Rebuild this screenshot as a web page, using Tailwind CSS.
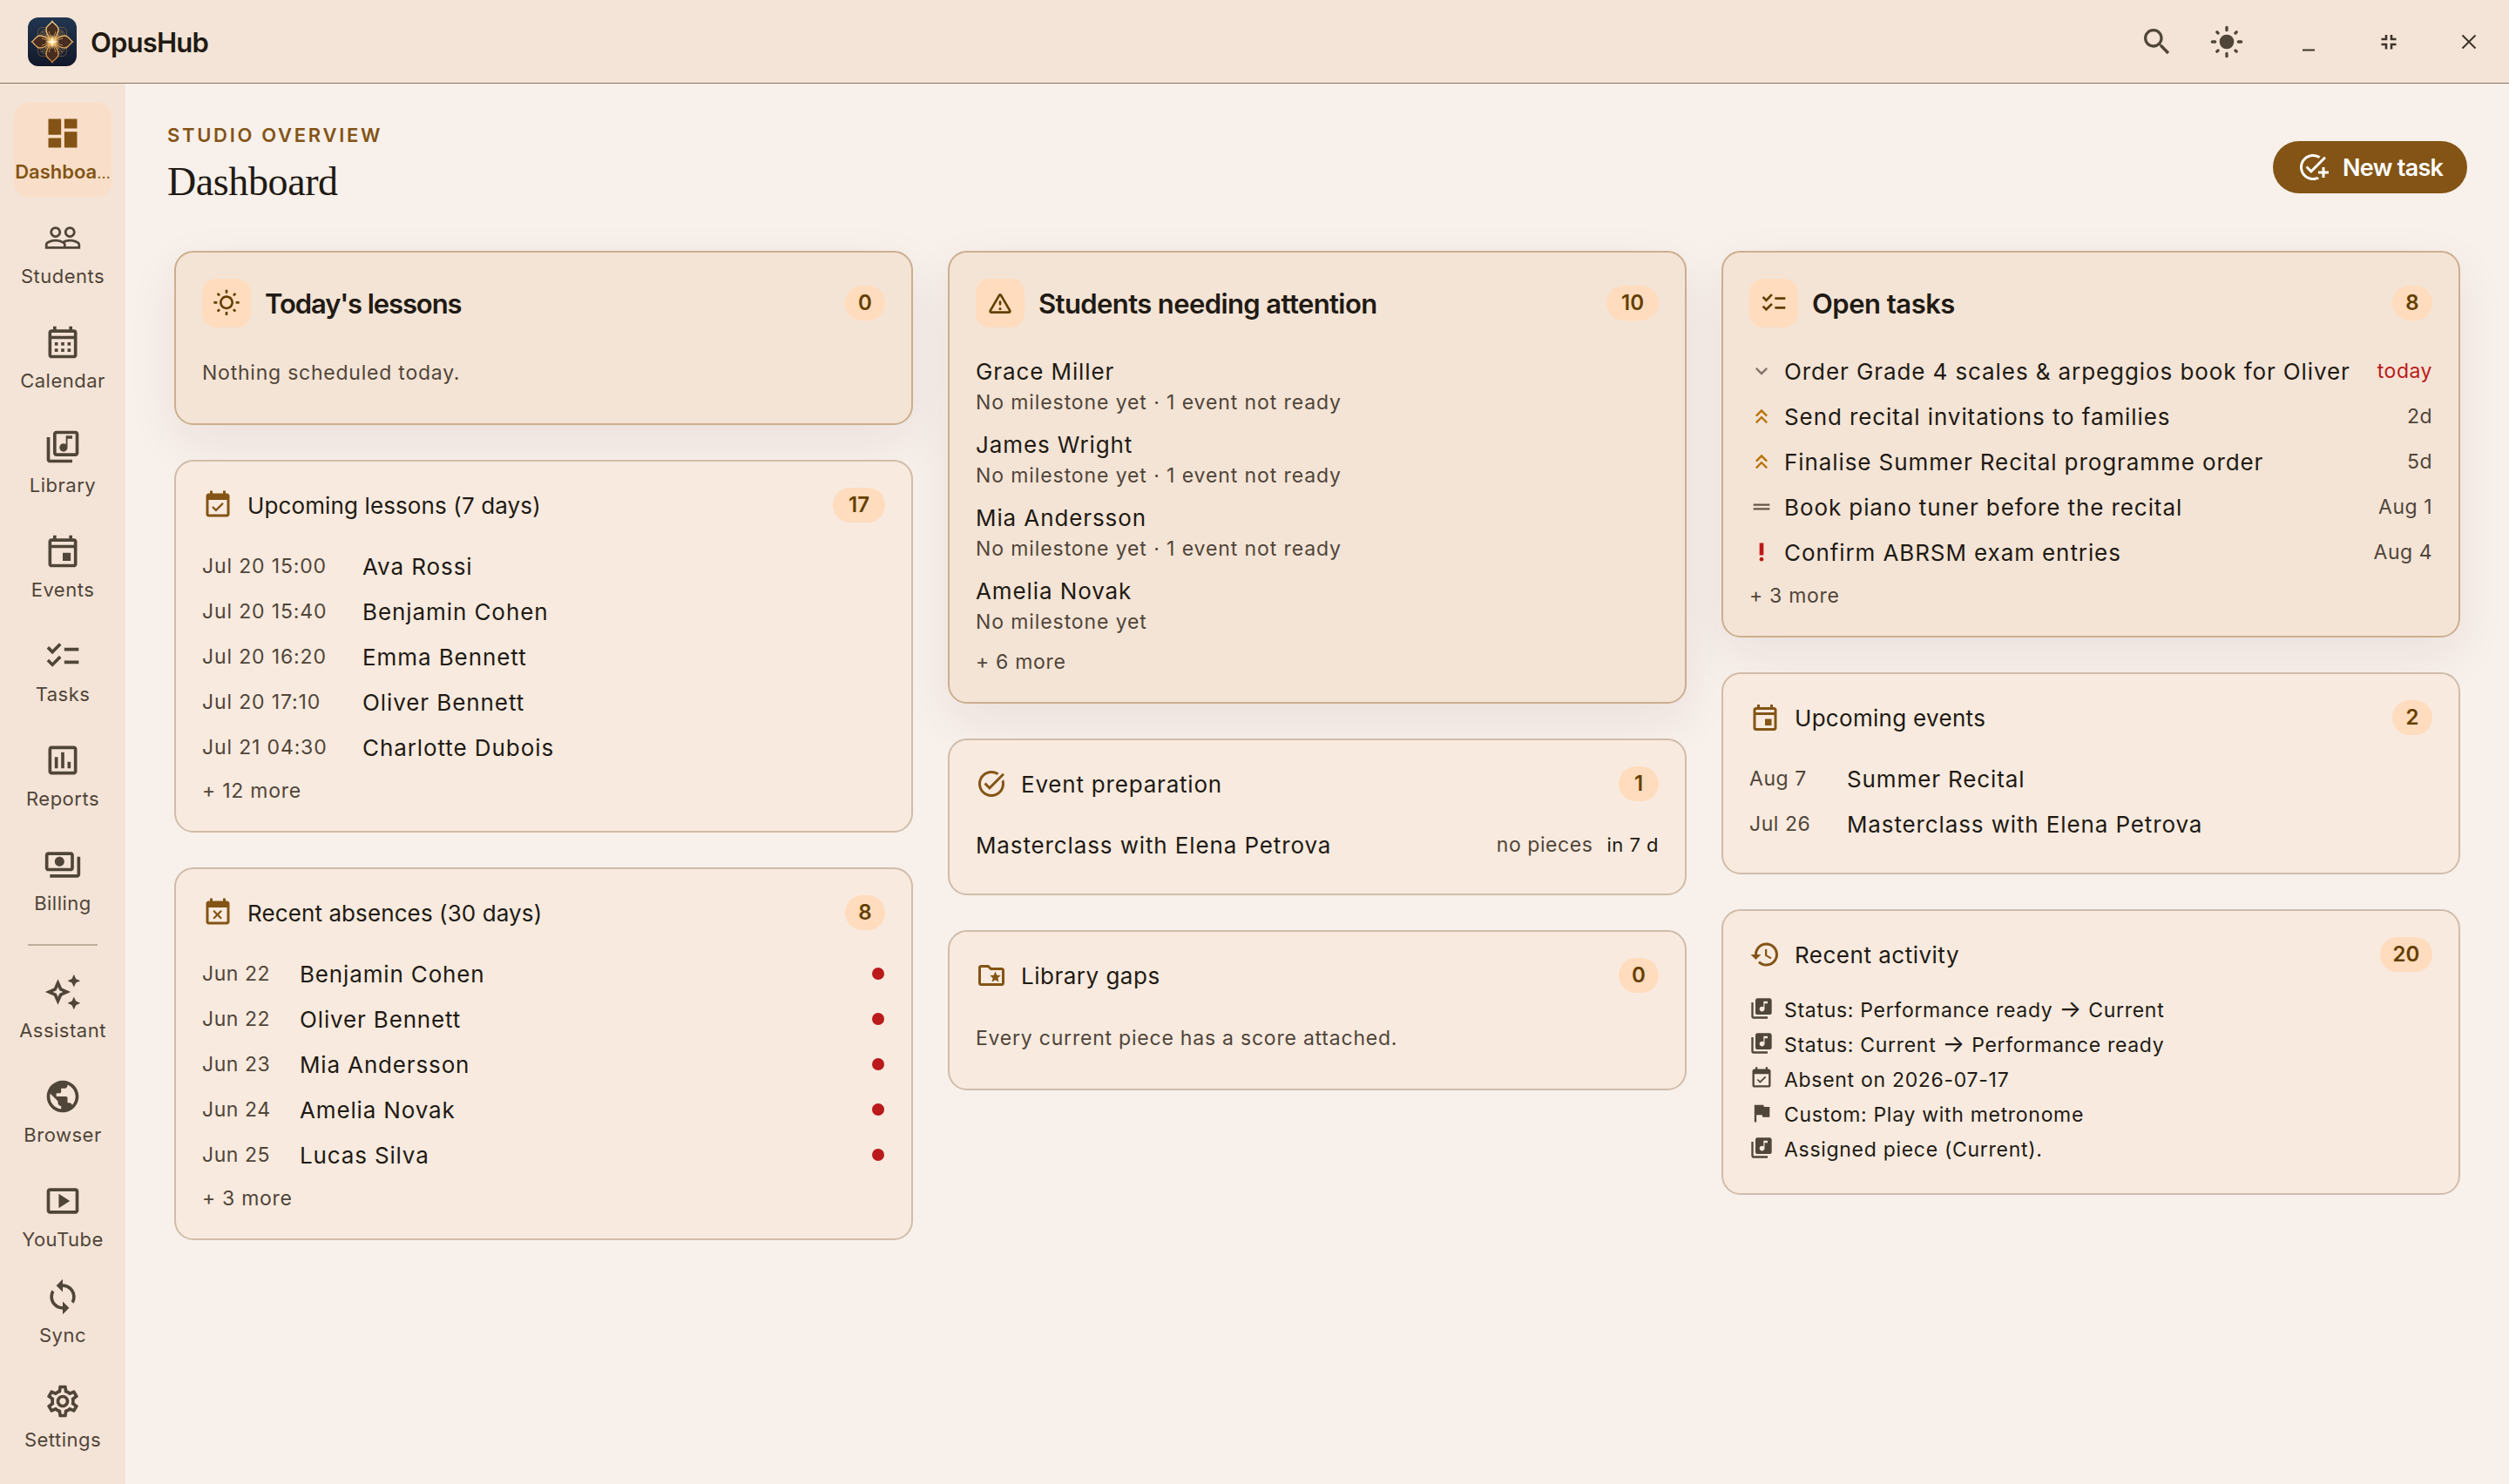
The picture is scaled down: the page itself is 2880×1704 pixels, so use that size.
<!DOCTYPE html>
<html lang="en">

<head>
    <meta charset="UTF-8">
    <meta name="viewport" content="width=device-width, initial-scale=1.0">
    <title>OpusHub</title>
    <script src="https://cdn.jsdelivr.net/npm/@tailwindcss/browser@4"></script>
</head>

<body class="w-[2880px] h-[1704px] overflow-hidden flex flex-col bg-[#f8f0eb] text-[#211a13] font-['Inter',sans-serif] font-[380]">

    <!-- icon sprite -->
    <svg class="hidden">
        <symbol id="dashboard" viewBox="0 0 24 24"><path d="M3 13h8V3H3v10zm0 8h8v-6H3v6zm10 0h8V11h-8v10zm0-18v6h8V3h-8z"/></symbol>
        <symbol id="people" viewBox="0 0 24 24"><path d="M16.5 13c-1.2 0-3.07.34-4.5 1-1.43-.67-3.3-1-4.5-1C5.33 13 1 14.08 1 16.25V19h22v-2.75c0-2.17-4.33-3.25-6.5-3.25zm-4 4.5h-10v-1.25c0-.54 2.56-1.75 5-1.75s5 1.21 5 1.75v1.25zm9 0H14v-1.25c0-.46-.2-.86-.52-1.22.88-.3 1.96-.53 3.02-.53 2.44 0 5 1.21 5 1.75v1.25zM7.5 12c1.93 0 3.5-1.57 3.5-3.5S9.43 5 7.5 5 4 6.57 4 8.5 5.57 12 7.5 12zm0-5.5c1.1 0 2 .9 2 2s-.9 2-2 2-2-.9-2-2 .9-2 2-2zm9 5.5c1.93 0 3.5-1.57 3.5-3.5S18.43 5 16.5 5 13 6.57 13 8.5s1.57 3.5 3.5 3.5zm0-5.5c1.1 0 2 .9 2 2s-.9 2-2 2-2-.9-2-2 .9-2 2-2z"/></symbol>
        <symbol id="calendar" viewBox="0 0 24 24"><path d="M19 4h-1V2h-2v2H8V2H6v2H5c-1.11 0-1.99.9-1.99 2L3 20c0 1.1.89 2 2 2h14c1.1 0 2-.9 2-2V6c0-1.1-.9-2-2-2zm0 16H5V10h14v10zm0-12H5V6h14v2zM9 14H7v-2h2v2zm4 0h-2v-2h2v2zm4 0h-2v-2h2v2zm-8 4H7v-2h2v2zm4 0h-2v-2h2v2zm4 0h-2v-2h2v2z"/></symbol>
        <symbol id="library" viewBox="0 0 24 24"><path d="M20 2H8c-1.1 0-2 .9-2 2v12c0 1.1.9 2 2 2h12c1.1 0 2-.9 2-2V4c0-1.1-.9-2-2-2zm0 14H8V4h12v12zm-7.5-1c1.38 0 2.5-1.12 2.5-2.5V7h3V5h-4v5.51c-.42-.32-.93-.51-1.5-.51-1.38 0-2.5 1.12-2.5 2.5s1.12 2.5 2.5 2.5zM4 6H2v14c0 1.1.9 2 2 2h14v-2H4V6z"/></symbol>
        <symbol id="library-fill" viewBox="0 0 24 24"><path d="M20 2H8c-1.1 0-2 .9-2 2v12c0 1.1.9 2 2 2h12c1.1 0 2-.9 2-2V4c0-1.1-.9-2-2-2zm-2 5h-3v5.5c0 1.38-1.12 2.5-2.5 2.5S10 13.88 10 12.5s1.12-2.5 2.5-2.5c.57 0 1.08.19 1.5.51V5h4v2zM4 6H2v14c0 1.1.9 2 2 2h14v-2H4V6z"/></symbol>
        <symbol id="event" viewBox="0 0 24 24"><path d="M19 4h-1V2h-2v2H8V2H6v2H5c-1.11 0-1.99.9-1.99 2L3 20c0 1.1.89 2 2 2h14c1.1 0 2-.9 2-2V6c0-1.1-.9-2-2-2zm0 16H5V10h14v10zM5 8V6h14v2H5zm7 5h5v5h-5z"/></symbol>
        <symbol id="checklist" viewBox="0 0 24 24"><path d="M22 7h-9v2h9V7zm0 8h-9v2h9v-2zM5.54 11 2 7.46l1.41-1.41 2.12 2.12 4.24-4.24 1.41 1.41L5.54 11zm0 8L2 15.46l1.41-1.41 2.12 2.12 4.24-4.24 1.41 1.41L5.54 19z"/></symbol>
        <symbol id="reports" viewBox="0 0 24 24"><path d="M9 17H7v-7h2v7zm4 0h-2V7h2v10zm4 0h-2v-4h2v4zm2 2H5V5h14v14zm0-16H5c-1.1 0-2 .9-2 2v14c0 1.1.9 2 2 2h14c1.1 0 2-.9 2-2V5c0-1.1-.9-2-2-2z"/></symbol>
        <symbol id="payments" viewBox="0 0 24 24"><path d="M19 14V6c0-1.1-.9-2-2-2H3c-1.1 0-2 .9-2 2v8c0 1.1.9 2 2 2h14c1.1 0 2-.9 2-2zm-2 0H3V6h14v8zm-7-7c-1.66 0-3 1.34-3 3s1.34 3 3 3 3-1.34 3-3-1.34-3-3-3zm13 0v11c0 1.1-.9 2-2 2H4v-2h17V7h2z"/></symbol>
        <symbol id="sparkle" viewBox="0 0 24 24"><path d="M19 9l1.25-2.75L23 5l-2.75-1.25L19 1l-1.25 2.75L15 5l2.75 1.25L19 9zm0 6l-1.25 2.75L15 19l2.75 1.25L19 23l1.25-2.75L23 19l-2.75-1.25L19 15zm-7.5-5.5L9 4 6.5 9.5 1 12l5.5 2.5L9 20l2.5-5.5L17 12l-5.5-2.5zm-1.51 3.49L9 15.17l-.99-2.18L5.83 12l2.18-.99L9 8.83l.99 2.18 2.18.99-2.18.99z"/></symbol>
        <symbol id="globe" viewBox="0 0 24 24"><path d="M12 2C6.48 2 2 6.48 2 12s4.48 10 10 10 10-4.48 10-10S17.52 2 12 2zm-1 17.93c-3.95-.49-7-3.85-7-7.93 0-.62.08-1.21.21-1.79L9 15v1c0 1.1.9 2 2 2v1.93zm6.9-2.54c-.26-.81-1-1.39-1.9-1.39h-1v-3c0-.55-.45-1-1-1H8v-2h2c.55 0 1-.45 1-1V7h2c1.1 0 2-.9 2-2v-.41c2.93 1.19 5 4.06 5 7.41 0 2.08-.8 3.97-2.1 5.39z"/></symbol>
        <symbol id="video" viewBox="0 0 24 24"><path d="M20 4H4c-1.1 0-2 .9-2 2v12c0 1.1.9 2 2 2h16c1.1 0 2-.9 2-2V6c0-1.1-.9-2-2-2zm0 14H4V6h16v12zM9.5 7.5v9l7-4.5z"/></symbol>
        <symbol id="sync" viewBox="0 0 24 24"><path d="M12 4V1L8 5l4 4V6c3.31 0 6 2.69 6 6 0 1.01-.25 1.97-.7 2.8l1.46 1.46C19.54 15.03 20 13.57 20 12c0-4.42-3.58-8-8-8zm0 14c-3.31 0-6-2.69-6-6 0-1.01.25-1.97.7-2.8L5.24 7.74C4.46 8.97 4 10.43 4 12c0 4.42 3.58 8 8 8v3l4-4-4-4v3z"/></symbol>
        <symbol id="settings" viewBox="0 0 24 24"><path d="M19.43 12.98c.04-.32.07-.64.07-.98 0-.34-.03-.66-.07-.98l2.11-1.65c.19-.15.24-.42.12-.64l-2-3.46c-.09-.16-.26-.25-.44-.25-.06 0-.12.01-.17.03l-2.49 1c-.52-.4-1.08-.73-1.69-.98l-.38-2.65C14.46 2.18 14.25 2 14 2h-4c-.25 0-.46.18-.49.42l-.38 2.65c-.61.25-1.17.59-1.69.98l-2.49-1c-.06-.02-.12-.03-.18-.03-.17 0-.34.09-.43.25l-2 3.46c-.13.22-.07.49.12.64l2.11 1.65c-.04.32-.07.65-.07.98 0 .33.03.66.07.98l-2.11 1.65c-.19.15-.24.42-.12.64l2 3.46c.09.16.26.25.44.25.06 0 .12-.01.17-.03l2.49-1c.52.4 1.08.73 1.69.98l.38 2.65c.03.24.24.42.49.42h4c.25 0 .46-.18.49-.42l.38-2.65c.61-.25 1.17-.59 1.69-.98l2.49 1c.06.02.12.03.18.03.17 0 .34-.09.43-.25l2-3.46c.12-.22.07-.49-.12-.64l-2.11-1.65zm-1.98-1.71c.04.31.05.52.05.73 0 .21-.02.43-.05.73l-.14 1.13.89.7 1.08.84-.7 1.21-1.27-.51-1.04-.42-.9.68c-.43.32-.84.56-1.25.73l-1.06.43-.16 1.13-.2 1.35h-1.4l-.19-1.35-.16-1.13-1.06-.43c-.43-.18-.83-.41-1.23-.71l-.91-.7-1.06.43-1.27.51-.7-1.21 1.08-.84.89-.7-.14-1.13c-.03-.31-.05-.54-.05-.74s.02-.43.05-.73l.14-1.13-.89-.7-1.08-.84.7-1.21 1.27.51 1.04.42.9-.68c.43-.32.84-.56 1.25-.73l1.06-.43.16-1.13.2-1.35h1.39l.19 1.35.16 1.13 1.06.43c.43.18.83.41 1.23.71l.91.7 1.06-.43 1.27-.51.7 1.21-1.07.85-.89.7.14 1.13zM12 8c-2.21 0-4 1.79-4 4s1.79 4 4 4 4-1.79 4-4-1.79-4-4-4zm0 6c-1.1 0-2-.9-2-2s.9-2 2-2 2 .9 2 2-.9 2-2 2z"/></symbol>
        <symbol id="search" viewBox="0 0 24 24"><path d="M15.5 14h-.79l-.28-.27C15.41 12.59 16 11.11 16 9.5 16 5.91 13.09 3 9.5 3S3 5.91 3 9.5 5.91 16 9.5 16c1.61 0 3.09-.59 4.23-1.57l.27.28v.79l5 4.99L20.49 19l-4.99-5zm-6 0C7.01 14 5 11.99 5 9.5S7.01 5 9.5 5 14 7.01 14 9.5 11.99 14 9.5 14z"/></symbol>
        <symbol id="light" viewBox="0 0 24 24"><circle cx="12" cy="12" r="5"/><path d="M12 2v2M12 20v2M2 12h2M20 12h2M5.3 5.3l.7.7M18 18l.7.7M5.3 18.7l.7-.7M18 6l.7-.7" stroke="currentColor" stroke-width="2" stroke-linecap="round"/></symbol>
        <symbol id="sun" viewBox="0 0 24 24"><path d="m6.76 4.84-1.8-1.79-1.41 1.41 1.79 1.79 1.42-1.41zM4 10.5H1v2h3v-2zm9-9.95h-2V3.5h2V.55zm7.45 3.91-1.41-1.41-1.79 1.79 1.41 1.41 1.79-1.79zm-3.21 13.7 1.79 1.8 1.41-1.41-1.8-1.79-1.4 1.4zM20 10.5v2h3v-2h-3zm-8-5c-3.31 0-6 2.69-6 6s2.69 6 6 6 6-2.69 6-6-2.69-6-6-6zm0 10c-2.21 0-4-1.79-4-4s1.79-4 4-4 4 1.79 4 4-1.79 4-4 4zm-1 6.95h2V19.5h-2v2.95zm-7.45-3.91 1.41 1.41 1.79-1.8-1.41-1.41-1.79 1.8z"/></symbol>
        <symbol id="warning" viewBox="0 0 24 24"><path d="M12 5.99 19.53 19H4.47L12 5.99M2.74 18c-.77 1.33.19 3 1.73 3h15.06c1.54 0 2.5-1.67 1.73-3L13.73 4.99c-.77-1.33-2.69-1.33-3.46 0L2.74 18zM11 11v2c0 .55.45 1 1 1s1-.45 1-1v-2c0-.55-.45-1-1-1s-1 .45-1 1zm0 5h2v2h-2z"/></symbol>
        <symbol id="event-ok" viewBox="0 0 24 24"><path d="M16.53 11.06 15.47 10l-4.88 4.88-2.12-2.12-1.06 1.06L10.59 17l5.94-5.94zM19 3h-1V1h-2v2H8V1H6v2H5c-1.11 0-1.99.9-1.99 2L3 19c0 1.1.89 2 2 2h14c1.1 0 2-.9 2-2V5c0-1.1-.9-2-2-2zm0 16H5V8h14v11z"/></symbol>
        <symbol id="event-busy" viewBox="0 0 24 24"><path d="M9.31 17l2.44-2.44L14.19 17l1.06-1.06-2.44-2.44 2.44-2.44L14.19 10l-2.44 2.44L9.31 10l-1.06 1.06 2.44 2.44-2.44 2.44L9.31 17zM19 3h-1V1h-2v2H8V1H6v2H5c-1.11 0-1.99.9-1.99 2L3 19c0 1.1.89 2 2 2h14c1.1 0 2-.9 2-2V5c0-1.1-.9-2-2-2zm0 16H5V8h14v11z"/></symbol>
        <symbol id="task" viewBox="0 0 24 24"><path d="M22 5.18 10.59 16.6l-4.24-4.24 1.41-1.41 2.83 2.83 10-10L22 5.18zm-2.21 5.04c.13.57.21 1.17.21 1.78 0 4.42-3.58 8-8 8s-8-3.58-8-8 3.58-8 8-8c1.58 0 3.04.46 4.28 1.25l1.44-1.44C16.1 2.67 14.13 2 12 2 6.48 2 2 6.48 2 12s4.48 10 10 10 10-4.48 10-10c0-1.19-.22-2.33-.6-3.39l-1.61 1.61z"/></symbol>
        <symbol id="add-task" viewBox="0 0 24 24"><path d="M22 5.18 10.59 16.6l-4.24-4.24 1.41-1.41 2.83 2.83 10-10L22 5.18zM12 20c-4.41 0-8-3.59-8-8s3.59-8 8-8c1.57 0 3.04.46 4.28 1.25l1.45-1.45C16.1 2.67 14.13 2 12 2 6.48 2 2 6.48 2 12s4.48 10 10 10c1.73 0 3.36-.44 4.78-1.22l-1.5-1.5c-1 .46-2.11.72-3.28.72zm7-5h-3v2h3v3h2v-3h3v-2h-3v-3h-2v3z"/></symbol>
        <symbol id="folder-star" viewBox="0 0 24 24"><path d="M20 6h-8l-2-2H4c-1.1 0-2 .9-2 2v12c0 1.1.9 2 2 2h16c1.1 0 2-.9 2-2V8c0-1.1-.9-2-2-2zm0 12H4V6h5.17l2 2H20v10zm-6.92-3.96L12.39 17 15 15.47 17.61 17l-.69-2.96 2.3-1.99-3.03-.26L15 9l-1.19 2.79-3.03.26z"/></symbol>
        <symbol id="history" viewBox="0 0 24 24"><path d="M13 3c-4.97 0-9 4.03-9 9H1l3.89 3.89.07.14L9 12H6c0-3.87 3.13-7 7-7s7 3.13 7 7-3.13 7-7 7c-1.93 0-3.68-.79-4.94-2.06l-1.42 1.42C8.27 19.99 10.51 21 13 21c4.97 0 9-4.03 9-9s-4.03-9-9-9zm-1 5v5l4.28 2.54.72-1.21-3.5-2.08V8H12z"/></symbol>
        <symbol id="flag" viewBox="0 0 24 24"><path d="M14.4 6 14 4H5v17h2v-7h5.6l.4 2h7V6z"/></symbol>
        <symbol id="low" viewBox="0 0 24 24"><path d="M16.59 8.59 12 13.17 7.41 8.59 6 10l6 6 6-6z"/></symbol>
        <symbol id="high" viewBox="0 0 24 24"><path d="M6 17.59 7.41 19 12 14.42 16.59 19 18 17.59l-6-6zM6 11l1.41 1.41L12 7.83l4.59 4.58L18 11l-6-6z"/></symbol>
        <symbol id="medium" viewBox="0 0 24 24"><path d="M20 9H4v2h16V9zM4 15h16v-2H4v2z"/></symbol>
        <symbol id="urgent" viewBox="0 0 24 24"><circle cx="12" cy="19" r="2"/><path d="M10 3h4v12h-4z"/></symbol>
    </svg>

    <header class="h-24 shrink-0 flex items-center pl-8 bg-[#f4e4d7] border-b border-[#84745f]">
        <svg class="size-14" viewBox="0 0 56 56" fill="none">
            <defs>
                <linearGradient id="night" x1="0" y1="0" x2="0" y2="1"><stop stop-color="#223650"/><stop offset="1" stop-color="#12182b"/></linearGradient>
                <linearGradient id="gold" gradientUnits="userSpaceOnUse" x1="0" y1="4" x2="0" y2="52"><stop stop-color="#f5d98c"/><stop offset="1" stop-color="#c9803a"/></linearGradient>
                <radialGradient id="glow"><stop stop-color="#fffbe8"/><stop offset=".25" stop-color="#ffdc8c" stop-opacity=".9"/><stop offset="1" stop-color="#e09a40" stop-opacity="0"/></radialGradient>
            </defs>
            <rect width="56" height="56" rx="12" fill="url(#night)"/>
            <g stroke="#a87437" stroke-width=".7" opacity=".8">
                <rect x="11.5" y="11.5" width="33" height="33" rx="5"/>
                <rect x="14" y="14" width="28" height="28" rx="6"/>
                <rect x="16.5" y="16.5" width="23" height="23" rx="7"/>
                <circle cx="19" cy="19" r="3"/><circle cx="37" cy="19" r="3"/><circle cx="19" cy="37" r="3"/><circle cx="37" cy="37" r="3"/>
                <path d="M28 28 16 16M28 28 40 16M28 28 16 40M28 28 40 40"/>
            </g>
            <g stroke="url(#gold)" stroke-width="1.4" fill="#4a2c1c" fill-opacity=".85">
                <path d="M28 28C24 23 20.500 18 21 13C21.500 9 26 8 28 4.500C30 8 34.500 9 35 13C35.500 18 32 23 28 28Z"/>
                <path d="M28 28C24 33 20.500 38 21 43C21.500 47 26 48 28 51.500C30 48 34.500 47 35 43C35.500 38 32 33 28 28Z"/>
                <path d="M28 28C23 24 18 20.500 13 21C9 21.500 8 26 4.500 28C8 30 9 34.500 13 35C18 35.500 23 32 28 28Z"/>
                <path d="M28 28C33 24 38 20.500 43 21C47 21.500 48 26 51.500 28C48 30 47 34.500 43 35C38 35.500 33 32 28 28Z"/>
            </g>
            <g stroke="#e0a254" stroke-width=".8">
                <path d="M28 28 19.500 19.500M28 28 36.500 19.500M28 28 19.500 36.500M28 28 36.500 36.500M28 28 24 16M28 28 32 16M28 28 24 40M28 28 32 40M28 28 16 24M28 28 16 32M28 28 40 24M28 28 40 32"/>
            </g>
            <circle cx="28" cy="28" r="9" fill="url(#glow)"/>
            <path d="M28 20l1.200 6.800L36 28l-6.800 1.200L28 36l-1.200-6.800L20 28l6.800-1.200z" fill="#fff3cf"/>
        </svg>
        <span class="ml-4 pt-[3px] text-[31px] font-semibold tracking-[-0.8px]">OpusHub</span>

        <div class="ml-auto h-full flex items-center text-[#504539]">
            <div class="w-20 flex justify-center"><svg class="size-10 fill-current"><use href="#search"/></svg></div>
            <div class="w-20 flex justify-center"><svg class="size-10 fill-current"><use href="#light"/></svg></div>
            <div class="w-2"></div>
            <div class="w-[92px] flex justify-center text-[#3d342b]"><svg class="size-6" viewBox="0 0 24 24"><path d="M5 21.500h14" stroke="currentColor" stroke-width="2"/></svg></div>
            <div class="w-[92px] flex justify-center text-[#3d342b]"><svg class="size-6" viewBox="0 0 24 24" fill="none"><path d="M3.500 9h5.500V4M15 4v5h5.500M3.500 15h5.500v5.500M20.500 15h-5.500v5.500" stroke="currentColor" stroke-width="2.600"/></svg></div>
            <div class="w-[92px] flex justify-center text-[#3d342b]"><svg class="size-6" viewBox="0 0 24 24"><path d="M4.500 4.500l15 15M19.500 4.500l-15 15" stroke="currentColor" stroke-width="2"/></svg></div>
        </div>
    </header>

    <div class="flex-1 flex min-h-0">
        <nav class="w-36 shrink-0 flex flex-col items-center gap-3 pt-[22px] bg-[#f4e4d7] text-[#504539] text-[22px] leading-[30px] tracking-[0.5px] [&_svg]:size-11 [&_svg]:fill-current [&>a]:w-28 [&>a]:h-[108px] [&>a]:shrink-0 [&>a]:pt-[13px] [&>a]:flex [&>a]:flex-col [&>a]:items-center [&>a]:gap-[7px]">
            <a class="rounded-2xl bg-[#f9dfc9] text-[#835415] font-semibold tracking-normal"><svg><use href="#dashboard"/></svg><span>Dashboa<span class="text-[18px] font-normal">…</span></span></a>
            <a><svg><use href="#people"/></svg>Students</a>
            <a><svg><use href="#calendar"/></svg>Calendar</a>
            <a><svg><use href="#library"/></svg>Library</a>
            <a><svg><use href="#event"/></svg>Events</a>
            <a><svg><use href="#checklist"/></svg>Tasks</a>
            <a><svg><use href="#reports"/></svg>Reports</a>
            <a><svg><use href="#payments"/></svg>Billing</a>
            <div class="w-20 h-0.5 my-1.5 shrink-0 bg-[#bfae9e]"></div>
            <a><svg><use href="#sparkle"/></svg>Assistant</a>
            <a><svg><use href="#globe"/></svg>Browser</a>
            <a><svg><use href="#video"/></svg>YouTube</a>
            <a class="-mt-2.5"><svg><use href="#sync"/></svg>Sync</a>
            <a><svg><use href="#settings"/></svg>Settings</a>
        </nav>

        <main class="flex-1 pt-10">
            <div class="h-[112px] pl-12 pr-12 flex items-center justify-between">
                <div class="pb-2">
                    <p class="text-[22px] leading-8 font-semibold tracking-[2.7px] text-[#835415]">STUDIO OVERVIEW</p>
                    <h1 class="mt-2.5 text-[46px] leading-[56px] tracking-[-0.4px] font-normal font-['Liberation_Serif',serif]">Dashboard</h1>
                </div>
                <button class="w-[223px] h-[60px] rounded-full bg-[#835415] text-white flex items-center pl-7 text-[27px] font-semibold tracking-[-0.7px]">
                    <svg class="size-9 mr-4 fill-current"><use href="#add-task"/></svg><span class="pt-0.5">New task</span>
                </button>
            </div>

            <div class="mt-10 pl-14 pr-14 grid grid-cols-3 gap-10 items-start">

                <!-- left column -->
                <div class="flex flex-col gap-10">
                    <section class="rounded-[22px] border-2 border-[#ccae8e] bg-[#f4e4d6] p-[30px] shadow-[0_20px_60px_rgba(50,25,45,0.07)]">
                        <div class="h-14 flex items-center">
                            <div class="size-14 rounded-2xl bg-[#ffdcbd] flex items-center justify-center text-[#643f00]"><svg class="size-8 fill-current"><use href="#sun"/></svg></div>
                            <h2 class="ml-4 pt-0.5 text-[31px] font-semibold tracking-[-1.1px]">Today's lessons</h2>
                            <span class="ml-auto w-[46px] h-10 rounded-full bg-[#ffdcbd] text-[#643f00] text-2xl font-semibold flex items-center justify-center">0</span>
                        </div>
                        <p class="mt-6 h-14 flex items-center text-[23px] tracking-[0.77px] text-[#504539]">Nothing scheduled today.</p>
                    </section>

                    <section class="relative rounded-[22px] border-2 border-[#d0bca9] bg-[#f8eadf] p-[30px]">
                        <div class="h-10 flex items-center">
                            <svg class="size-9 fill-[#835415]"><use href="#event-ok"/></svg>
                            <h2 class="ml-4 text-[26px] tracking-[0.12px]">Upcoming lessons (7 days)</h2>
                            <span class="ml-auto w-[60px] h-10 rounded-full bg-[#ffdcbd] text-[#643f00] text-2xl font-semibold flex items-center justify-center">17</span>
                        </div>
                        <ul class="mt-6 text-[26px] tracking-[0.92px] [&>li]:h-[52px] [&>li]:flex [&>li]:items-center [&_time]:w-[184px] [&_time]:text-[23px] [&_time]:tracking-[0.85px] [&_time]:text-[#504539]">
                            <li><time>Jul 20 15:00</time>Ava Rossi</li>
                            <li><time>Jul 20 15:40</time>Benjamin Cohen</li>
                            <li><time>Jul 20 16:20</time>Emma Bennett</li>
                            <li><time>Jul 20 17:10</time>Oliver Bennett</li>
                            <li><time>Jul 21 04:30</time>Charlotte Dubois</li>
                        </ul>
                        <p class="pt-2 text-[23px] leading-8 tracking-[0.75px] text-[#504539]">+ 12 more</p>
                    </section>

                    <section class="rounded-[22px] border-2 border-[#d0bca9] bg-[#f8eadf] p-[30px]">
                        <div class="h-10 flex items-center">
                            <svg class="size-9 fill-[#835415]"><use href="#event-busy"/></svg>
                            <h2 class="ml-4 text-[26px] tracking-[0.1px]">Recent absences (30 days)</h2>
                            <span class="ml-auto w-[46px] h-10 rounded-full bg-[#ffdcbd] text-[#643f00] text-2xl font-semibold flex items-center justify-center">8</span>
                        </div>
                        <ul class="mt-6 text-[26px] tracking-[0.85px] [&>li]:h-[52px] [&>li]:flex [&>li]:items-center [&_time]:w-28 [&_time]:text-[23px] [&_time]:tracking-[0.55px] [&_time]:text-[#504539] [&_i]:ml-auto [&_i]:mr-px [&_i]:size-3.5 [&_i]:rounded-full [&_i]:bg-[#ba1a1a]">
                            <li><time>Jun 22</time>Benjamin Cohen<i></i></li>
                            <li><time>Jun 22</time>Oliver Bennett<i></i></li>
                            <li><time>Jun 23</time>Mia Andersson<i></i></li>
                            <li><time>Jun 24</time>Amelia Novak<i></i></li>
                            <li><time>Jun 25</time>Lucas Silva<i></i></li>
                        </ul>
                        <p class="pt-2 text-[23px] leading-8 tracking-[0.7px] text-[#504539]">+ 3 more</p>
                    </section>
                </div>

                <!-- middle column -->
                <div class="flex flex-col gap-10">
                    <section class="rounded-[22px] border-2 border-[#ccae8e] bg-[#f4e4d6] p-[30px] shadow-[0_20px_60px_rgba(50,25,45,0.07)]">
                        <div class="h-14 flex items-center">
                            <div class="size-14 rounded-2xl bg-[#ffdcbd] flex items-center justify-center text-[#643f00]"><svg class="size-8 fill-current"><use href="#warning"/></svg></div>
                            <h2 class="ml-4 pt-0.5 text-[31px] font-semibold tracking-[-0.6px]">Students needing attention</h2>
                            <span class="ml-auto w-[60px] h-10 rounded-full bg-[#ffdcbd] text-[#643f00] text-2xl font-semibold flex items-center justify-center">10</span>
                        </div>
                        <ul class="mt-6 text-[26px] leading-9 tracking-[0.9px] [&>li]:h-[84px] [&>li]:pt-[9px] [&_p]:text-[23px] [&_p]:leading-[34px] [&_p]:text-[#504539]">
                            <li>Grace Miller<p>No milestone yet · 1 event not ready</p></li>
                            <li>James Wright<p>No milestone yet · 1 event not ready</p></li>
                            <li>Mia Andersson<p>No milestone yet · 1 event not ready</p></li>
                            <li>Amelia Novak<p>No milestone yet</p></li>
                        </ul>
                        <p class="pt-2 text-[23px] leading-8 tracking-[0.7px] text-[#504539]">+ 6 more</p>
                    </section>

                    <section class="relative rounded-[22px] border-2 border-[#d0bca9] bg-[#f8eadf] p-[30px]">
                        <div class="h-10 flex items-center">
                            <svg class="size-9 fill-[#835415]"><use href="#task"/></svg>
                            <h2 class="ml-4 text-[26px] tracking-[0.8px]">Event preparation</h2>
                            <span class="ml-auto w-[46px] h-10 rounded-full bg-[#ffdcbd] text-[#643f00] text-2xl font-semibold flex items-center justify-center">1</span>
                        </div>
                        <div class="mt-6 h-[52px] flex items-center text-[26px] tracking-[0.88px]">
                            Masterclass with Elena Petrova
                            <span class="ml-auto text-[23px] tracking-[0.55px] text-[#504539]">no pieces</span>
                            <span class="ml-4 text-[22px] tracking-[0.5px]">in 7 d</span>
                        </div>
                    </section>

                    <section class="rounded-[22px] border-2 border-[#d0bca9] bg-[#f8eadf] p-[30px]">
                        <div class="h-10 flex items-center">
                            <svg class="size-9 fill-[#835415]"><use href="#folder-star"/></svg>
                            <h2 class="ml-4 text-[26px] tracking-[0.5px]">Library gaps</h2>
                            <span class="ml-auto w-[46px] h-10 rounded-full bg-[#ffdcbd] text-[#643f00] text-2xl font-semibold flex items-center justify-center">0</span>
                        </div>
                        <p class="mt-6 h-14 flex items-center text-[23px] tracking-[0.78px] text-[#504539]">Every current piece has a score attached.</p>
                    </section>
                </div>

                <!-- right column -->
                <div class="flex flex-col gap-10">
                    <section class="rounded-[22px] border-2 border-[#ccae8e] bg-[#f4e4d6] p-[30px] shadow-[0_20px_60px_rgba(50,25,45,0.07)]">
                        <div class="h-14 flex items-center">
                            <div class="size-14 rounded-2xl bg-[#ffdcbd] flex items-center justify-center text-[#643f00]"><svg class="size-8 fill-current"><use href="#checklist"/></svg></div>
                            <h2 class="ml-4 pt-0.5 text-[31px] font-semibold tracking-[-0.5px]">Open tasks</h2>
                            <span class="ml-auto w-[46px] h-10 rounded-full bg-[#ffdcbd] text-[#643f00] text-2xl font-semibold flex items-center justify-center">8</span>
                        </div>
                        <ul class="mt-6 text-[26px] tracking-[0.91px] [&>li]:h-[52px] [&>li]:flex [&>li]:items-center [&_svg]:size-7 [&_svg]:mr-3 [&_time]:ml-auto [&_time]:text-[23px] [&_time]:tracking-[0.5px]">
                            <li><svg class="fill-[#84746a]"><use href="#low"/></svg>Order Grade 4 scales &amp; arpeggios book for Oliver<time class="text-[#ba1a1a]">today</time></li>
                            <li><svg class="fill-[#b8720c]"><use href="#high"/></svg>Send recital invitations to families<time class="text-[#504539]">2d</time></li>
                            <li><svg class="fill-[#b8720c]"><use href="#high"/></svg>Finalise Summer Recital programme order<time class="text-[#504539]">5d</time></li>
                            <li><svg class="fill-[#635649]"><use href="#medium"/></svg>Book piano tuner before the recital<time class="text-[#504539]">Aug 1</time></li>
                            <li><svg class="fill-[#ba1a1a]"><use href="#urgent"/></svg>Confirm ABRSM exam entries<time class="text-[#504539]">Aug 4</time></li>
                        </ul>
                        <p class="pt-2 text-[23px] leading-8 tracking-[0.7px] text-[#504539]">+ 3 more</p>
                    </section>

                    <section class="relative rounded-[22px] border-2 border-[#d0bca9] bg-[#f8eadf] p-[30px]">
                        <div class="h-10 flex items-center">
                            <svg class="size-9 fill-[#835415]"><use href="#event"/></svg>
                            <h2 class="ml-4 text-[26px] tracking-[0.3px]">Upcoming events</h2>
                            <span class="ml-auto w-[46px] h-10 rounded-full bg-[#ffdcbd] text-[#643f00] text-2xl font-semibold flex items-center justify-center">2</span>
                        </div>
                        <ul class="mt-6 text-[26px] tracking-[0.88px] [&>li]:h-[52px] [&>li]:flex [&>li]:items-center [&_time]:w-28 [&_time]:text-[23px] [&_time]:tracking-[0.55px] [&_time]:text-[#504539]">
                            <li><time>Aug 7</time>Summer Recital</li>
                            <li><time>Jul 26</time>Masterclass with Elena Petrova</li>
                        </ul>
                    </section>

                    <section class="rounded-[22px] border-2 border-[#d0bca9] bg-[#f8eadf] p-[30px]">
                        <div class="h-10 flex items-center">
                            <svg class="size-9 fill-[#835415]"><use href="#history"/></svg>
                            <h2 class="ml-4 text-[26px] tracking-[0.5px]">Recent activity</h2>
                            <span class="ml-auto w-[60px] h-10 rounded-full bg-[#ffdcbd] text-[#643f00] text-2xl font-semibold flex items-center justify-center">20</span>
                        </div>
                        <ul class="mt-6 text-[23px] tracking-[0.7px] [&>li]:h-10 [&>li]:flex [&>li]:items-center [&_svg]:size-7 [&_svg]:mr-3 [&_svg]:-mt-1 [&_svg]:fill-[#504539]">
                            <li><svg><use href="#library-fill"/></svg><p>Status: Performance ready <span class="text-[27px] leading-none">→</span> Current</p></li>
                            <li><svg><use href="#library-fill"/></svg><p>Status: Current <span class="text-[27px] leading-none">→</span> Performance ready</p></li>
                            <li><svg><use href="#event-ok"/></svg>Absent on 2026-07-17</li>
                            <li><svg><use href="#flag"/></svg>Custom: Play with metronome</li>
                            <li><svg><use href="#library-fill"/></svg>Assigned piece (Current).</li>
                        </ul>
                    </section>
                </div>

            </div>
        </main>
    </div>
</body>

</html>
